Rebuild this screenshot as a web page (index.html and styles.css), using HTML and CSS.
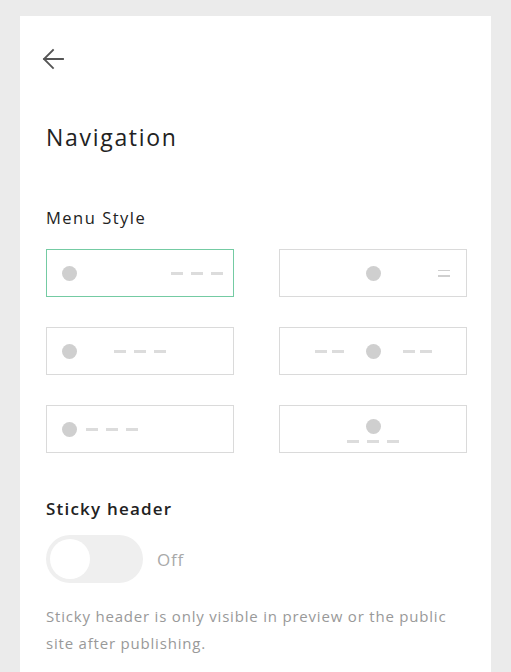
FILE: index.html
```html
<!DOCTYPE html>
<html>
<head>
<meta charset="utf-8">
<link rel="stylesheet" href="styles.css">
</head>
<body>
<div class="panel">
  <button class="back" aria-label="Back">
    <svg width="22" height="22" viewBox="0 0 22 22"><path d="M21 11H2M11 2L2 11l9 9" fill="none" stroke="#555" stroke-width="1.8" stroke-linecap="square"/></svg>
  </button>
  <h1 class="title">Navigation</h1>
  <h2 class="label">Menu Style</h2>
  <div class="styles">
    <div class="opt opt-a selected"><span class="dot"></span><span class="dashes"><i></i><i></i><i></i></span></div>
    <div class="opt opt-b"><span></span><span class="dot"></span><span class="burger"><i></i><i></i></span></div>
    <div class="opt opt-c"><span class="dot"></span><span class="dashes"><i></i><i></i><i></i></span><span></span></div>
    <div class="opt opt-d"><span class="dashes tight"><i></i><i></i></span><span class="dot"></span><span class="dashes tight"><i></i><i></i></span></div>
    <div class="opt opt-e"><span class="dot"></span><span class="dashes"><i></i><i></i><i></i></span></div>
    <div class="opt opt-f"><span class="dot"></span><span class="dashes"><i></i><i></i><i></i></span></div>
  </div>
  <h2 class="label sticky">Sticky header</h2>
  <div class="toggle-row">
    <span class="toggle"><span class="knob"></span></span>
    <span class="state">Off</span>
  </div>
  <p class="help">Sticky header is only visible in preview or the public site after publishing.</p>
</div>
</body>
</html>
```
FILE: styles.css
```css
html, body { margin: 0; padding: 0; }
body {
  background: #ebebeb;
  font-family: "Open Sans", "Noto Sans", sans-serif;
  color: #222;
}
.panel {
  margin: 16px 20px 0;
  background: #fff;
  min-height: calc(100vh - 16px);
  padding: 32px 24px 0 26px;
  box-sizing: border-box;
}
.back {
  display: block;
  border: 0;
  background: none;
  padding: 0;
  margin: 0 0 0 -4px;
  width: 22px;
  height: 22px;
  cursor: pointer;
}
.back svg { display: block; }
.title {
  margin: 52px 0 0;
  font-size: 23px;
  font-weight: 400;
  line-height: 30px;
  letter-spacing: 1.7px;
  color: #222;
}
.label {
  margin: 55px 0 0;
  font-size: 16.5px;
  font-weight: 400;
  line-height: 22px;
  letter-spacing: 1.5px;
  color: #222;
}
.styles {
  display: grid;
  grid-template-columns: 188px 188px;
  column-gap: 45px;
  row-gap: 30px;
  margin-top: 20px;
}
.opt {
  height: 48px;
  box-sizing: border-box;
  border: 1px solid #dadada;
  display: flex;
  align-items: center;
}
.opt.selected { border-color: #74cba3; }
.dot {
  width: 15px;
  height: 15px;
  border-radius: 50%;
  background: #cfcfcf;
  flex: none;
}
.dashes { display: flex; gap: 8px; }
.dashes i {
  display: block;
  width: 12px;
  height: 3px;
  background: #dcdcdc;
}
.dashes.tight { gap: 5px; }
.burger { display: flex; flex-direction: column; gap: 4px; justify-self: end; }
.burger i { display: block; width: 12px; height: 1.5px; background: #cfcfcf; }

.opt-a { justify-content: space-between; padding: 0 10px 0 15px; }
.opt-b { display: grid; grid-template-columns: 1fr auto 1fr; align-items: center; padding: 0 16px; }
.opt-c { display: grid; grid-template-columns: 1fr auto 1fr; align-items: center; padding: 0 15px; }
.opt-d { justify-content: center; gap: 22px; }
.opt-e { padding: 0 15px; gap: 9px; }
.opt-f { flex-direction: column; justify-content: center; gap: 6px; padding-top: 4px; }

.sticky {
  margin-top: 45px;
  font-weight: 600;
  font-size: 17px;
  letter-spacing: 1.2px;
}
.toggle-row {
  display: flex;
  align-items: center;
  gap: 14px;
  margin-top: 15px;
}
.toggle {
  width: 97px;
  height: 48px;
  border-radius: 24px;
  background: #efefef;
  display: flex;
  align-items: center;
  padding-left: 4px;
  box-sizing: border-box;
}
.knob {
  width: 40px;
  height: 40px;
  border-radius: 50%;
  background: #fff;
}
.state { font-size: 17px; color: #a9a9a9; letter-spacing: 0.8px; }
.help {
  margin: 20px 0 0;
  font-size: 15px;
  line-height: 27px;
  letter-spacing: 0.8px;
  color: #999;
}
```
